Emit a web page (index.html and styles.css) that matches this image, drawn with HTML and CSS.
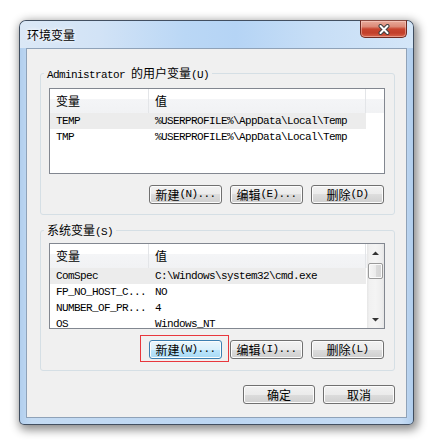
FILE: index.html
```html
<!DOCTYPE html>
<html>
<head>
<meta charset="utf-8">
<link rel="stylesheet" href="styles.css">
</head>
<body>
<div class="win">
  <div class="titlebar">
    <span class="title">环境变量</span>
    <div class="close">
      <svg width="14" height="11" viewBox="0 0 14 11"><path d="M3.5 2 L10.5 9 M10.5 2 L3.5 9" stroke="#404040" stroke-width="4" stroke-linecap="round"/><path d="M3.5 2 L10.5 9 M10.5 2 L3.5 9" stroke="#fff" stroke-width="2" stroke-linecap="round"/></svg>
    </div>
  </div>
  <div class="client">
    <fieldset class="group g1">
      <legend><span class="m">Administrator </span><span class="c">的用户变量</span><span class="m">(U)</span></legend>
      <div class="list">
        <div class="cols">
          <div class="lhead">
            <div class="h1"><span class="c">变量</span></div>
            <div class="h2"><span class="c">值</span></div>
            <div class="hfill"></div>
          </div>
          <div class="lbody">
            <div class="row sel"><div class="c1">TEMP</div><div class="c2">%USERPROFILE%\AppData\Local\Temp</div></div>
            <div class="row"><div class="c1">TMP</div><div class="c2">%USERPROFILE%\AppData\Local\Temp</div></div>
          </div>
        </div>
      </div>
      <div class="btns">
        <div class="btn"><span class="c">新建</span><span class="m">(N)...</span></div>
        <div class="btn"><span class="c">编辑</span><span class="m">(E)...</span></div>
        <div class="btn"><span class="c">删除</span><span class="m">(D)</span></div>
      </div>
    </fieldset>
    <fieldset class="group g2">
      <legend><span class="c">系统变量</span><span class="m">(S)</span></legend>
      <div class="list">
        <div class="cols">
          <div class="lhead">
            <div class="h1"><span class="c">变量</span></div>
            <div class="h2"><span class="c">值</span></div>
          </div>
          <div class="lbody">
            <div class="row sel"><div class="c1">ComSpec</div><div class="c2">C:\Windows\system32\cmd.exe</div></div>
            <div class="row"><div class="c1">FP_NO_HOST_C...</div><div class="c2">NO</div></div>
            <div class="row"><div class="c1">NUMBER_OF_PR...</div><div class="c2">4</div></div>
            <div class="row"><div class="c1">OS</div><div class="c2">Windows_NT</div></div>
          </div>
        </div>
        <div class="vscroll">
          <div class="sbtn"><svg width="7" height="4" viewBox="0 0 7 4"><path d="M0 4 L3.5 0.5 L7 4 Z" fill="#333"/></svg></div>
          <div class="track"><div class="thumb"></div></div>
          <div class="sbtn"><svg width="7" height="4" viewBox="0 0 7 4"><path d="M0 0 L3.5 3.5 L7 0 Z" fill="#333"/></svg></div>
        </div>
      </div>
      <div class="btns">
        <div class="btn focus"><span class="c">新建</span><span class="m">(W)...</span></div>
        <div class="btn"><span class="c">编辑</span><span class="m">(I)...</span></div>
        <div class="btn"><span class="c">删除</span><span class="m">(L)</span></div>
      </div>
    </fieldset>
    <div class="footer">
      <div class="btn wide"><span class="c">确定</span></div>
      <div class="btn wide"><span class="c">取消</span></div>
    </div>
  </div>
</div>
</body>
</html>
```
FILE: styles.css
```css
* { box-sizing: border-box; }
html, body { margin: 0; }
body {
  width: 438px;
  height: 440px;
  overflow: hidden;
  background: #ffffff;
  font-family: "Liberation Mono", "Noto Sans CJK SC", monospace;
  font-size: 11px;
  letter-spacing: -0.6px;
  color: #000;
}
.m {
  font-family: "Liberation Mono", monospace;
  font-size: 11px;
  letter-spacing: -0.6px;
}
.c {
  font-family: "Noto Sans CJK SC", sans-serif;
  font-size: 12px;
  letter-spacing: 0;
}
.win {
  margin: 20px 0 0 19px;
  width: 395px;
  height: 405px;
  border: 1px solid rgba(35, 45, 60, 0.8);
  border-radius: 7px 7px 5px 5px;
  background: linear-gradient(90deg, #b2cfee 0%, #c4dbf3 3%, #bcd6f2 50%, #c6dcf4 97%, #b0cdec 100%);
  box-shadow: 2px 3px 10px 2px rgba(0, 0, 0, 0.45);
  padding: 0 6px 6px;
  display: flex;
  flex-direction: column;
}
.titlebar {
  height: 27px;
  margin: 0 -6px;
  padding: 0 6px 0 7px;
  border-radius: 6px 6px 0 0;
  display: flex;
  justify-content: space-between;
  align-items: center;
  background: linear-gradient(90deg, #dbe8f6 0%, #d2e3f6 20%, #bad7f5 42%, #b5d4f5 55%, #c7def6 75%, #d4e6f8 100%);
}
.title {
  font-family: "Noto Sans CJK SC", sans-serif;
  font-size: 12px;
  letter-spacing: 0;
  line-height: 16px;
  color: #000;
  text-shadow: 0 0 5px #fff, 0 0 3px #fff;
}
.close {
  align-self: flex-start;
  margin-top: -1px;
  width: 47px;
  height: 18px;
  border: 1px solid #6e2a22;
  border-top-color: #8a4a40;
  border-radius: 0 0 5px 5px;
  background: linear-gradient(#e9aa9b 0%, #dc8a78 35%, #c8452f 50%, #c23f2a 75%, #d8634a 100%);
  box-shadow: inset 0 0 0 1px rgba(255, 220, 210, 0.45);
  display: flex;
  align-items: center;
  justify-content: center;
}
.client {
  flex: 1;
  background: #f0f0f0;
  border: 1px solid #8fa2b8;
  display: flex;
  flex-direction: column;
}
.group {
  margin: 0 11px 0 13px;
  padding: 8px 9px 10px 8px;
  border: 1px solid #d5dfe5;
  border-radius: 3px;
  min-width: 0;
}
.g1 { margin-top: 17px; }
.g2 { margin-top: 8px; padding-top: 6px; padding-bottom: 11px; }
.group legend {
  padding: 0 3px;
  margin-left: -5px;
  line-height: 14px;
  height: 14px;
  white-space: nowrap;
}
.group legend span { line-height: 14px; }
.list {
  height: 86px;
  border: 1px solid #828790;
  background: #fff;
  display: flex;
  overflow: hidden;
}
.cols {
  flex: 1;
  display: flex;
  flex-direction: column;
  min-width: 0;
}
.lhead {
  height: 24px;
  display: flex;
  flex-shrink: 0;
  background: linear-gradient(#ffffff 0%, #ffffff 40%, #f4f5f7 42%, #f1f2f4 100%);
}
.lhead .c { line-height: 24px; }
.h1, .h2 {
  border-right: 1px solid #e3e5e8;
  padding-left: 6px;
  line-height: 24px;
}
.h1 { width: 99px; }
.h2 { width: 217px; }
.hfill { flex: 1; }
.lbody { flex: 1; overflow: hidden; }
.row {
  display: flex;
  width: 316px;
  height: 16px;
  line-height: 16px;
  white-space: nowrap;
}
.row.sel { background: #ececec; }
.c1 { width: 99px; padding-left: 6px; }
.c2 { width: 217px; padding-left: 6px; }
.vscroll {
  width: 17px;
  flex-shrink: 0;
  display: flex;
  flex-direction: column;
  background: linear-gradient(90deg, #e6e6e6 0%, #f1f1f1 15%, #f4f4f4 50%, #eeeeee 85%, #e6e6e6 100%);
}
.sbtn {
  height: 17px;
  display: flex;
  align-items: center;
  justify-content: center;
}
.track { flex: 1; padding: 2px 1px 0; }
.thumb {
  height: 16px;
  border: 1px solid #9a9a9a;
  border-radius: 2px;
  background: linear-gradient(90deg, #f6f6f6 0%, #ececec 50%, #dcdcdc 51%, #d4d4d4 100%);
  box-shadow: inset 0 0 0 1px #fbfbfb;
}
.btns {
  display: flex;
  justify-content: flex-end;
  gap: 8px;
  margin-top: 11px;
  padding-right: 1px;
}
.btn {
  width: 73px;
  height: 19px;
  border: 1px solid #707070;
  border-radius: 3px;
  background: linear-gradient(#f2f2f2 0%, #ebebeb 50%, #dddddd 50%, #cfcfcf 100%);
  box-shadow: inset 0 0 0 1px #fcfcfc;
  display: flex;
  align-items: center;
  justify-content: center;
  line-height: 17px;
  position: relative;
}
.btn .c, .btn .m { line-height: 17px; }
.btn.focus {
  border-color: #3c7fb1;
  background: linear-gradient(#eaf6fd 0%, #d9f0fc 50%, #bee6fd 50%, #a7d9f5 100%);
}
.btn.focus::after {
  content: "";
  position: absolute;
  left: -10px;
  top: -6px;
  right: -8px;
  bottom: -4px;
  border: 1px solid #e8373d;
}
.footer {
  display: flex;
  justify-content: flex-end;
  gap: 8px;
  margin-top: 14px;
  padding-right: 11px;
}
.btn.wide { width: 72px; }
```
